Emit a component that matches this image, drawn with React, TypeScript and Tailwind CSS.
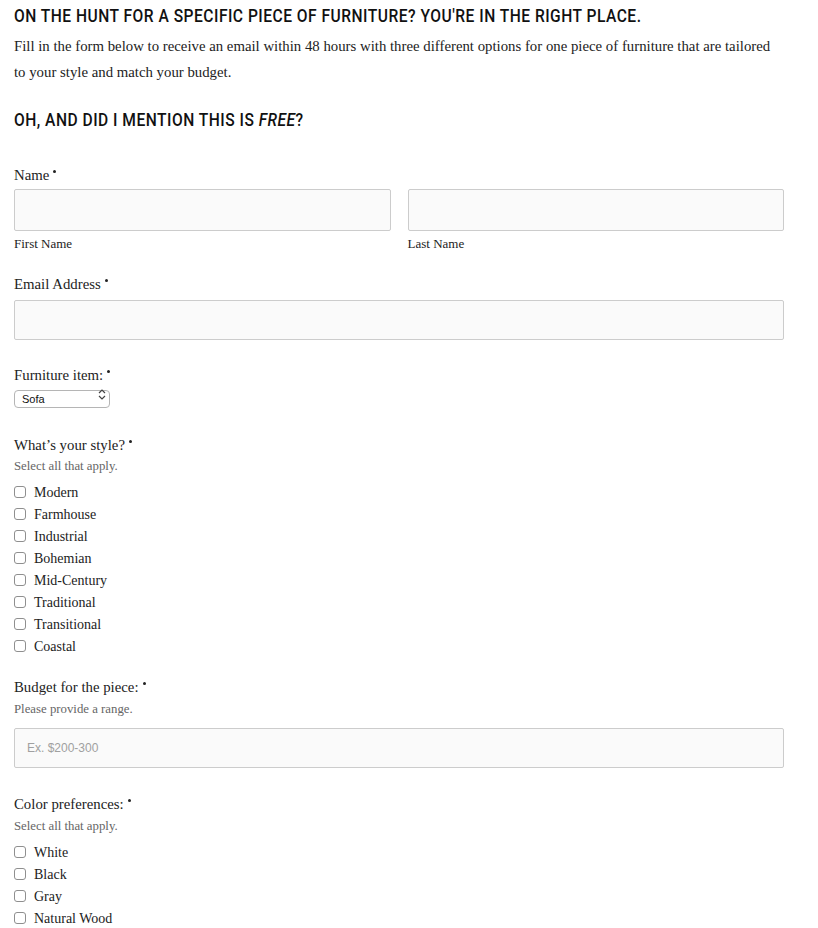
import React from 'react';

const serif = { fontFamily: '"Liberation Serif", "DejaVu Serif", serif' };
const cond = { fontFamily: 'Roboto, "Liberation Sans", sans-serif' };

const Label: React.FC<{ text: string; className?: string }> = ({ text, className }) => (
  <div className={`text-[14.8px] leading-[18px] text-[#222] ${className ?? ''}`}>
    {text}
    <span className="ml-[4px] inline-block w-[3px] h-[3px] rounded-full bg-[#222] align-top mt-[4px]" />
  </div>
);

const Check: React.FC<{ label: string }> = ({ label }) => (
  <label className="flex items-center h-[22px] text-[14px] text-[#222]">
    <input
      type="checkbox"
      className="appearance-none w-[12px] h-[12px] border border-[#8f8f8f] rounded-[3px] bg-white mr-[8px]"
    />
    {label}
  </label>
);

const TextBox: React.FC<{ className?: string; placeholder?: string }> = ({ className, placeholder }) => (
  <input
    type="text"
    placeholder={placeholder}
    className={`block bg-[#fafafa] border border-[#cccccc] rounded-[2px] outline-none px-[12px] text-[12px] placeholder:text-[#a0a0a0] ${className ?? ''}`}
    style={{ fontFamily: '"Liberation Sans", Arial, sans-serif' }}
  />
);

export default function App() {
  const styles = ['Modern', 'Farmhouse', 'Industrial', 'Bohemian', 'Mid-Century', 'Traditional', 'Transitional', 'Coastal'];
  const colors = ['White', 'Black', 'Gray', 'Natural Wood'];
  return (
    <div className="bg-white w-[818px] h-[928px] overflow-hidden pl-[14px] pt-[4px]" style={serif}>
      <div className="w-[770px]">
        <h1 className="text-[19px] leading-[24px] text-[#111] font-medium tracking-[0.6px] uppercase whitespace-nowrap origin-left scale-x-[0.82]" style={cond}>
          On the hunt for a specific piece of furniture? You're in the right place.
        </h1>
        <p className="mt-[5px] text-[14.8px] leading-[26px] text-[#222]">
          Fill in the form below to receive an email within 48 hours with three different options for one piece of furniture that are tailored to your style and match your budget.
        </p>
        <h2 className="mt-[23px] text-[19px] leading-[24px] text-[#111] font-medium tracking-[0.6px] whitespace-nowrap origin-left scale-x-[0.82]" style={cond}>
          OH, AND DID I MENTION THIS IS <em>FREE</em>?
        </h2>

        <Label text="Name" className="mt-[34px]" />
        <div className="mt-[5px] flex gap-[17px]">
          <div className="flex-1">
            <TextBox className="w-full h-[42px]" />
            <div className="mt-[5px] text-[13px] leading-[16px] text-[#222]">First Name</div>
          </div>
          <div className="flex-1">
            <TextBox className="w-full h-[42px]" />
            <div className="mt-[5px] text-[13px] leading-[16px] text-[#222]">Last Name</div>
          </div>
        </div>

        <Label text="Email Address" className="mt-[23px]" />
        <TextBox className="mt-[7px] w-full h-[40px]" />

        <Label text="Furniture item:" className="mt-[26px]" />
        <div className="relative mt-[2px] w-[96px] h-[18px]">
          <select
            className="appearance-none w-full h-full border border-[#b5b5b5] rounded-[4px] bg-white pl-[7px] text-[11px] text-[#111] outline-none"
            style={{ fontFamily: '"Liberation Sans", Arial, sans-serif' }}
            defaultValue="Sofa"
          >
            <option>Sofa</option>
          </select>
          <svg className="absolute right-[4px] top-[3px] pointer-events-none" width="8" height="11" viewBox="0 0 8 11" fill="none" stroke="#444" strokeWidth="1.2">
            <path d="M1 4 L4 1 L7 4" />
            <path d="M1 7 L4 10 L7 7" />
          </svg>
        </div>

        <Label text="What’s your style?" className="mt-[32px]" />
        <div className="mt-[4px] text-[12.8px] leading-[16px] text-[#666]">Select all that apply.</div>
        <div className="mt-[7px]">
          {styles.map(s => <Check key={s} label={s} />)}
        </div>

        <Label text="Budget for the piece:" className="mt-[21px]" />
        <div className="mt-[5px] text-[12.8px] leading-[16px] text-[#666]">Please provide a range.</div>
        <TextBox className="mt-[11px] w-full h-[40px]" placeholder="Ex. $200-300" />

        <Label text="Color preferences:" className="mt-[27px]" />
        <div className="mt-[5px] text-[12.8px] leading-[16px] text-[#666]">Select all that apply.</div>
        <div className="mt-[7px]">
          {colors.map(s => <Check key={s} label={s} />)}
        </div>
      </div>
    </div>
  );
}
